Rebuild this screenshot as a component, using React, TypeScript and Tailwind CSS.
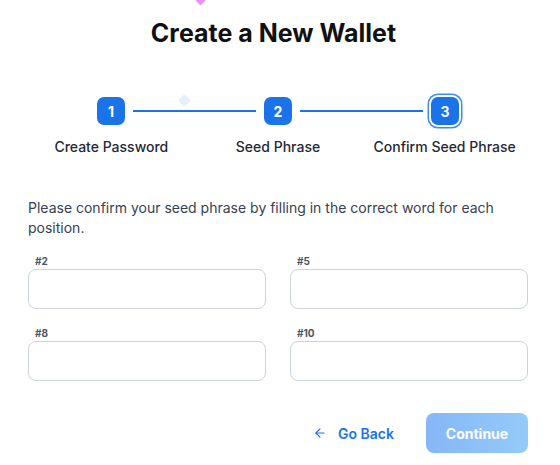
import React from "react";
import { ArrowLeft } from "lucide-react";

function StepBox({ n, active }: { n: number; active?: boolean }) {
  return (
    <div
      className={
        "flex h-[28px] w-[28px] shrink-0 items-center justify-center rounded-[7px] bg-[#1a73e8] text-[14px] font-bold text-white " +
        (active ? "shadow-[0_0_0_2px_#ffffff,0_0_0_3.5px_#3b8ef0]" : "")
      }
    >
      {n}
    </div>
  );
}

function Field({ label }: { label: string }) {
  return (
    <div className="flex min-w-0 flex-col">
      <div className="ml-[7px] text-[10px] font-bold leading-[12px] text-[#4b5563]">{label}</div>
      <input
        size={1}
        className="mt-[2px] h-[40px] w-full min-w-0 rounded-[8px] border border-[#cbd3e1] bg-white px-3 text-[14px] outline-none"
        type="text"
      />
    </div>
  );
}

export default function App() {
  return (
    <div
      className="relative h-[465px] w-[560px] overflow-hidden bg-white pl-[28px] pr-[32px]"
      style={{ fontFamily: "Inter, 'Noto Sans', sans-serif" }}
    >
      <div className="absolute left-[197px] top-[-3px] h-[7px] w-[7px] rotate-45 bg-[#e990f5]" />
      <div className="absolute left-[180px] top-[96px] h-[9px] w-[9px] rotate-45 rounded-[1px] bg-[#e8effc]" />

      <h1 className="pr-[9px] pt-[18px] text-center text-[25px] font-bold leading-[30px] text-[#111111]">
        Create a New Wallet
      </h1>

      <div className="mt-[49px] flex items-center px-[69px]">
        <StepBox n={1} />
        <div className="mx-[8px] h-[2px] flex-1 bg-[#1a73e8]" />
        <StepBox n={2} />
        <div className="mx-[8px] h-[2px] flex-1 bg-[#1a73e8]" />
        <StepBox n={3} active />
      </div>

      <div className="mt-[12px] grid grid-cols-3 text-center text-[14px] font-medium leading-[20px] text-[#1f2937]">
        <div>Create Password</div>
        <div>Seed Phrase</div>
        <div>Confirm Seed Phrase</div>
      </div>

      <p className="mt-[41px] w-[500px] text-[14px] leading-[20px] text-[#374151]">
        Please confirm your seed phrase by filling in the correct word for each position.
      </p>

      <div className="mt-[17px] grid grid-cols-[minmax(0,1fr)_minmax(0,1fr)] gap-x-[24px] gap-y-[18px]">
        <Field label="#2" />
        <Field label="#5" />
        <Field label="#8" />
        <Field label="#10" />
      </div>

      <div className="mt-[32px] flex items-center justify-end gap-[16px]">
        <button className="flex h-[40px] items-center gap-[11px] px-[16px] text-[14px] font-semibold text-[#1a73e8]">
          <ArrowLeft size={14} strokeWidth={2} />
          <span>Go Back</span>
        </button>
        <button className="h-[40px] w-[102px] rounded-[8px] bg-gradient-to-r from-[#87b6f6] to-[#92cbf9] text-[14px] font-bold text-white">
          Continue
        </button>
      </div>
    </div>
  );
}
